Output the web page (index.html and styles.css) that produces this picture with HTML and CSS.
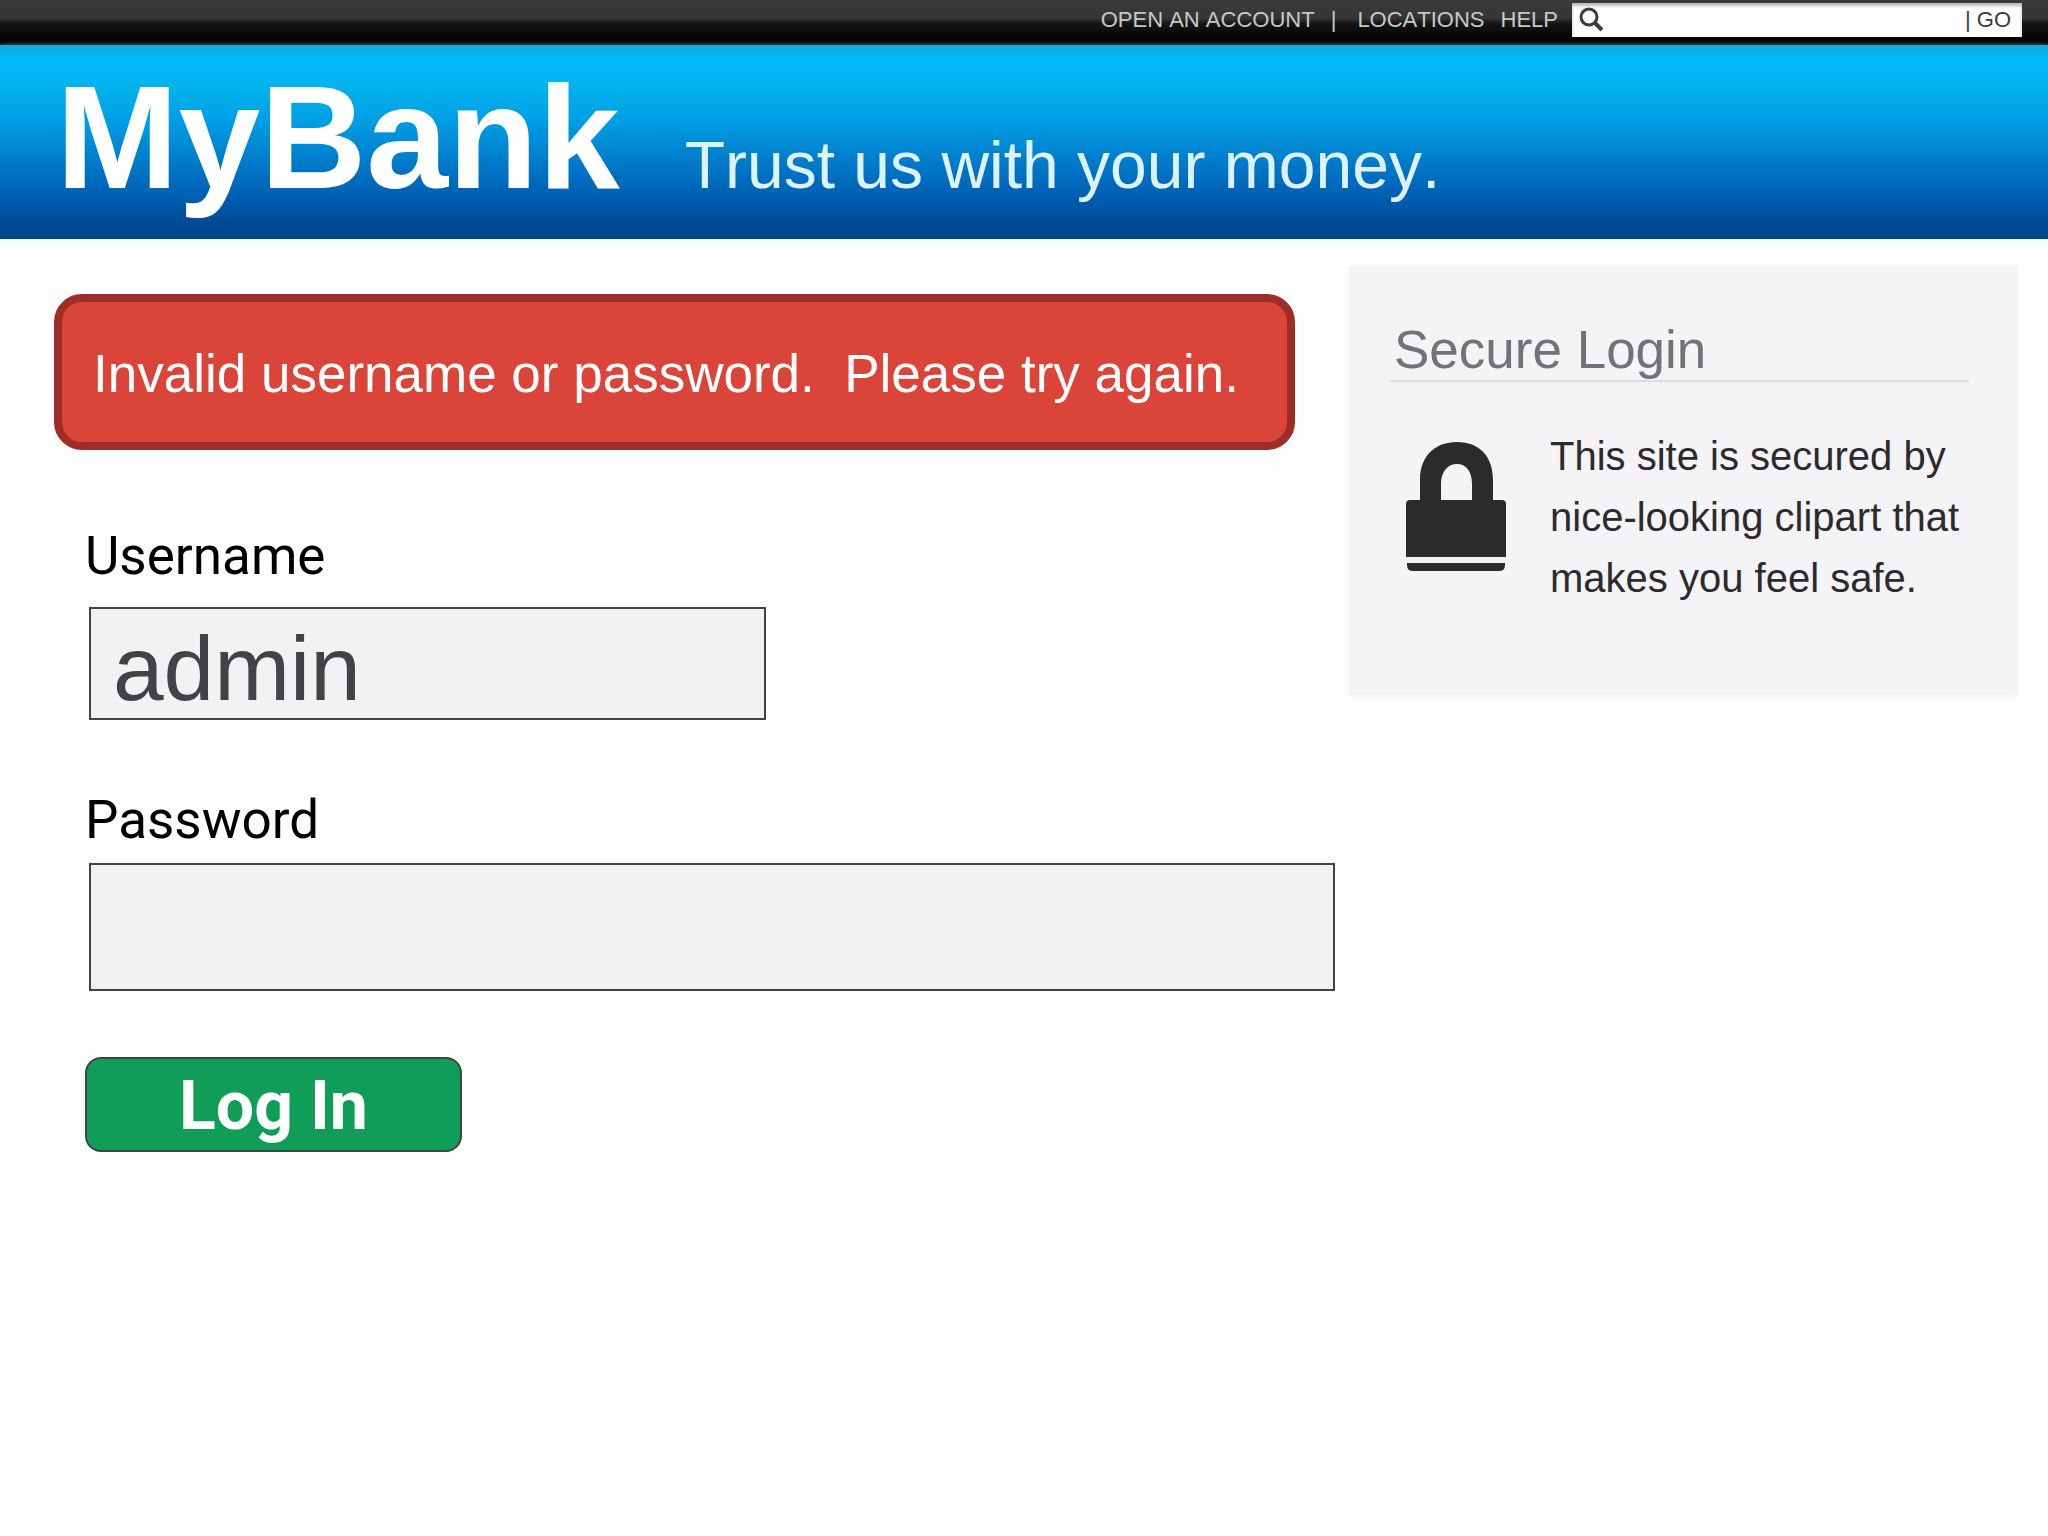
FILE: index.html
```html
<!DOCTYPE html>
<html lang="en">
<head>
<meta charset="utf-8">
<title>MyBank</title>
<link rel="stylesheet" href="styles.css">
</head>
<body>
<div class="topbar">
  <nav class="topnav">
    <a href="#">OPEN AN ACCOUNT</a>
    <span class="divider">|</span>
    <a href="#">LOCATIONS</a>
    <a href="#">HELP</a>
  </nav>
  <form class="search" role="search">
    <svg class="search-icon" viewBox="0 0 26 26" aria-hidden="true">
      <circle cx="11" cy="10" r="8"/>
      <path d="M17 16l7 7" stroke-width="4"/>
    </svg>
    <input class="search-input" type="search" aria-label="Search">
    <span>|</span>
    <button class="search-go" type="submit">GO</button>
  </form>
</div>
<header class="banner">
  <h1 class="brand">MyBank</h1>
  <p class="tagline">Trust us with your money.</p>
</header>
<main class="page">
  <section>
    <p class="alert" role="alert">Invalid username or password.&nbsp; Please try again.</p>
    <form class="login-form">
      <label class="label" for="username">Username</label>
      <input class="field field-username" id="username" type="text" value="admin">
      <label class="label" for="password">Password</label>
      <input class="field field-password" id="password" type="password">
      <button class="submit" type="submit">Log In</button>
    </form>
  </section>
  <aside class="secure">
    <h2 class="secure-title">Secure Login</h2>
    <div class="secure-body">
      <svg class="lock" viewBox="0 0 100 130" aria-hidden="true">
        <path fill-rule="evenodd" d="M14 58V38C14 14 29 0 51 0s36 14 36 38v20h9q4 0 4 4v53H0V62q0-4 4-4zM35 58h31V42c0-13-6-20-15-20s-16 7-16 20z"/>
        <path d="M1 121h98v2q0 6-6 6H7q-6 0-6-6z"/>
      </svg>
      <p class="secure-text">This site is secured by nice-looking clipart that makes you feel safe.</p>
    </div>
  </aside>
</main>
</body>
</html>
```
FILE: styles.css
```css
* {
  box-sizing: border-box;
}

body {
  margin: 0;
  background: #fdfdfd;
  color: #000;
  font-family: "Liberation Sans", Arial, sans-serif;
}

h1, h2, p {
  margin: 0;
  font-weight: 400;
}

input, button {
  font-family: inherit;
}

/* Top bar */
.topbar {
  display: flex;
  align-items: center;
  justify-content: flex-end;
  gap: 14px;
  height: 45px;
  padding: 0 26px 6px 0;
  background: linear-gradient(#3a3a3a 0%, #363636 40%, #151515 52%, #000 92%);
  font-size: 22px;
  line-height: 24px;
}

.topnav {
  display: flex;
  gap: 16px;
  color: #c8c8c8;
  font-kerning: none;
}

.topnav a {
  color: inherit;
  text-decoration: none;
}

.divider {
  padding-right: 5px;
}

.search {
  display: flex;
  align-items: center;
  width: 450px;
  height: 34px;
  padding: 0 11px 0 6px;
  background: #fdfdfd;
  box-shadow: inset 0 3px 3px #bbb;
  color: #3c3c3c;
}

.search-icon {
  width: 26px;
  height: 26px;
  fill: none;
  stroke: #3c3c3c;
  stroke-width: 3;
}

.search-input {
  flex: 1;
  min-width: 0;
  border: 0;
  background: none;
  font-size: 22px;
  outline: 0;
}

.search-go {
  padding: 0 0 0 6px;
  border: 0;
  background: none;
  color: inherit;
  font-size: 22px;
  line-height: 24px;
}

/* Banner */
.banner {
  display: flex;
  align-items: baseline;
  gap: 65px;
  padding: 18px 56px 28px;
  background: linear-gradient(#14a8d8 0%, #00bbfc 8%, #04b4ec 20%, #00a0e6 38%, #0078c8 62%, #005cb0 80%, #004a94 92%, #004588 100%);
  box-shadow: 0 2px 6px #d8fbff;
  color: #fff;
}

.brand {
  font-size: 147px;
  font-weight: 700;
  line-height: 148px;
}

.tagline {
  color: #dcf3ff;
  font-size: 66px;
  font-kerning: none;
  line-height: 72px;
}

/* Page */
.page {
  display: grid;
  grid-template-columns: minmax(0, 1fr) minmax(0, 667px);
  align-items: start;
  gap: 15px;
  padding: 28px 31px 28px 54px;
}

.alert {
  margin: 27px 40px 0 0;
  padding: 42px 31px 38px;
  border: 8px solid #a02c27;
  border-radius: 28px;
  background: #db4439;
  color: #fff;
  font-size: 53px;
  line-height: 60px;
}

.login-form {
  display: flex;
  flex-direction: column;
  align-items: flex-start;
  padding: 76px 0 0 31px;
}

.label {
  font-family: Roboto, sans-serif;
  font-size: 53px;
  line-height: 60px;
}

.field {
  width: 100%;
  border: 2px solid #444246;
  border-radius: 0;
  background: #f4f1f5;
  color: #444246;
  font-size: 91px;
  outline: 0;
}

.field-username {
  max-width: 677px;
  height: 113px;
  margin: 21px 0 70px 4px;
  padding: 10px 22px 0;
}

.field-password {
  width: calc(100% - 4px);
  height: 128px;
  margin: 13px 0 66px 4px;
  padding: 0 22px;
}

.submit {
  width: 377px;
  height: 95px;
  padding: 2px 0 0;
  border: 2px solid #444246;
  border-radius: 16px;
  background: #109d58;
  color: #fff;
  font-family: Roboto, sans-serif;
  font-size: 68px;
  font-weight: 700;
  line-height: 88px;
}

/* Secure login card */
.secure {
  padding: 53px 48px 86px 40px;
  background: #f4f3f6;
  box-shadow: 0 0 6px #f4f3f6;
}

.secure-title {
  padding-left: 4px;
  border-bottom: 2px solid #dddce0;
  color: #737277;
  font-size: 53px;
  line-height: 60px;
}

.secure-body {
  display: flex;
  align-items: flex-start;
  gap: 44px;
  padding: 44px 0 0 16px;
}

.lock {
  flex: none;
  width: 100px;
  height: 130px;
  margin-top: 16px;
  fill: #2c2a2d;
}

.secure-text {
  color: #2c2a2d;
  font-size: 40px;
  line-height: 61px;
}
```
